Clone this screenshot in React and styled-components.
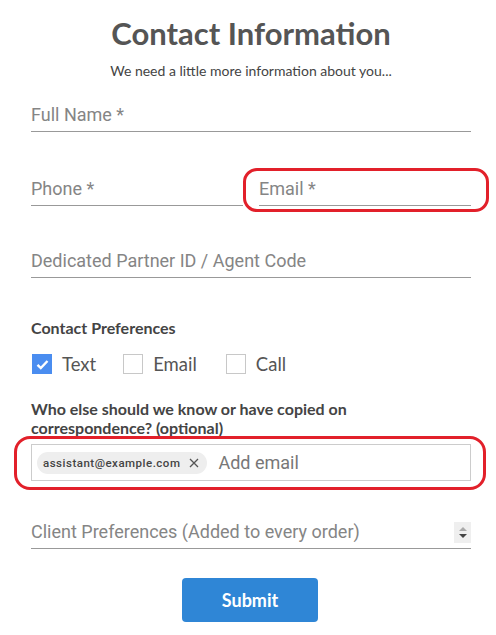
import React from 'react'
import styled, { createGlobalStyle } from 'styled-components'

const GlobalStyle = createGlobalStyle`
  body {
    margin: 0;
    background: #fff;
    font-family: Lato, "Liberation Sans", sans-serif;
  }
`

const Page = styled.div`
  width: 496px;
  box-sizing: border-box;
  padding: 15px 25px 0 31px;
  display: flex;
  flex-direction: column;
`

const Title = styled.h1`
  margin: 0;
  text-align: center;
  font-family: Lato, sans-serif;
  font-weight: 700;
  font-size: 31px;
  line-height: 36px;
  color: #555;
`

const Subtitle = styled.p`
  margin: 12px 0 0;
  text-align: center;
  font-family: Lato, sans-serif;
  font-size: 14px;
  line-height: 16px;
  color: #444;
`

const Field = styled.div`
  position: relative;
  margin-top: ${p => p.$top || 0}px;
`

const Input = styled.input`
  display: block;
  width: 100%;
  box-sizing: border-box;
  height: 35px;
  padding: 1px 0 0;
  border: none;
  border-bottom: 1px solid #999;
  outline: none;
  font-family: Roboto, sans-serif;
  font-size: 18px;
  color: #444;
  background: transparent;
  &::placeholder {
    color: #858585;
  }
`

const Row = styled.div`
  display: grid;
  grid-template-columns: 1fr 1fr;
  column-gap: 16px;
  margin-top: ${p => p.$top || 0}px;
`

const Highlight = styled.div`
  position: absolute;
  top: ${p => p.$t}px;
  bottom: ${p => p.$b}px;
  left: ${p => p.$l}px;
  right: ${p => p.$r}px;
  border: 3px solid #e2202a;
  border-radius: ${p => p.$radius}px;
  pointer-events: none;
`

const SectionLabel = styled.div`
  margin-top: ${p => p.$top || 0}px;
  font-family: Lato, sans-serif;
  font-weight: 700;
  font-size: 16px;
  line-height: 19px;
  color: #444;
  max-width: 360px;
`

const Checks = styled.div`
  display: flex;
  align-items: center;
  height: 22px;
  margin-top: 16px;
  padding-left: 1px;
`

const CheckItem = styled.label`
  display: flex;
  align-items: center;
  gap: 10px;
  margin-right: ${p => p.$mr}px;
  font-family: Lato, sans-serif;
  font-size: 18.5px;
  color: #555;
`

const Box = styled.span`
  width: 20px;
  height: 20px;
  box-sizing: border-box;
  display: flex;
  align-items: center;
  justify-content: center;
  background: ${p => (p.$checked ? '#4a8df0' : '#fff')};
  border: 1px solid ${p => (p.$checked ? '#4a8df0' : '#c8c8c8')};
`

const TagBox = styled.div`
  position: relative;
  margin-top: 7px;
  height: 37px;
  box-sizing: border-box;
  border: 1px solid #ccc;
  display: flex;
  align-items: center;
  padding-left: 5px;
  gap: 11px;
`

const Chip = styled.span`
  display: flex;
  align-items: center;
  gap: 9px;
  height: 22px;
  padding: 0 8px 0 6px;
  border-radius: 11px;
  background: #eee;
  font-family: Roboto, sans-serif;
  font-weight: 500;
  font-size: 11.5px;
  letter-spacing: 0.5px;
  color: #444;
`

const TagInput = styled.input`
  flex: 1;
  border: none;
  outline: none;
  padding: 0;
  font-family: Roboto, sans-serif;
  font-size: 18px;
  background: transparent;
  &::placeholder {
    color: #777;
  }
`

const Spinner = styled.span`
  position: absolute;
  right: 0;
  top: 8px;
  width: 17px;
  height: 21px;
  background: #efefef;
  display: flex;
  flex-direction: column;
  align-items: center;
  justify-content: center;
  gap: 3px;
`

const Arrow = styled.span`
  width: 0;
  height: 0;
  border-left: 4px solid transparent;
  border-right: 4px solid transparent;
  ${p =>
    p.$up
      ? 'border-bottom: 4px solid #aaa;'
      : 'border-top: 4px solid #444;'}
`

const Actions = styled.div`
  display: flex;
  justify-content: center;
  margin-top: 29px;
  padding-right: 2px;
`

const Submit = styled.button`
  width: 136px;
  height: 44px;
  border: none;
  border-radius: 4px;
  background: #2f86d6;
  color: #fff;
  font-family: Lato, sans-serif;
  font-weight: 700;
  font-size: 18px;
`

const Check = () => (
  <svg width="13" height="11" viewBox="0 0 13 11">
    <path d="M1.5 5.8 L4.8 9 L11.5 2" fill="none" stroke="#fff" strokeWidth="2.4" />
  </svg>
)

const Close = () => (
  <svg width="10" height="10" viewBox="0 0 10 10">
    <path d="M1 1 L9 9 M9 1 L1 9" stroke="#555" strokeWidth="1.3" />
  </svg>
)

export default function App() {
  return (
    <Page>
      <GlobalStyle />
      <Title>Contact Information</Title>
      <Subtitle>We need a little more information about you...</Subtitle>

      <Field $top={18}>
        <Input placeholder="Full Name *" />
      </Field>

      <Row $top={39}>
        <Field>
          <Input placeholder="Phone *" />
        </Field>
        <Field>
          <Input placeholder="Email *" />
          <Highlight $t={-3} $b={-6} $l={-16} $r={-18} $radius={14} />
        </Field>
      </Row>

      <Field $top={37}>
        <Input placeholder="Dedicated Partner ID / Agent Code" />
      </Field>

      <SectionLabel $top={40}>Contact Preferences</SectionLabel>
      <Checks>
        <CheckItem $mr={27}>
          <Box $checked>
            <Check />
          </Box>
          Text
        </CheckItem>
        <CheckItem $mr={29}>
          <Box />
          Email
        </CheckItem>
        <CheckItem $mr={0}>
          <Box />
          Call
        </CheckItem>
      </Checks>

      <SectionLabel $top={24}>
        Who else should we know or have copied on correspondence? (optional)
      </SectionLabel>
      <TagBox>
        <Chip>
          assistant@example.com
          <Close />
        </Chip>
        <TagInput placeholder="Add email" />
        <Highlight $t={-9} $b={-10} $l={-18} $r={-16} $radius={16} />
      </TagBox>

      <Field $top={33}>
        <Input placeholder="Client Preferences (Added to every order)" />
        <Spinner>
          <Arrow $up />
          <Arrow />
        </Spinner>
      </Field>

      <Actions>
        <Submit>Submit</Submit>
      </Actions>
    </Page>
  )
}
